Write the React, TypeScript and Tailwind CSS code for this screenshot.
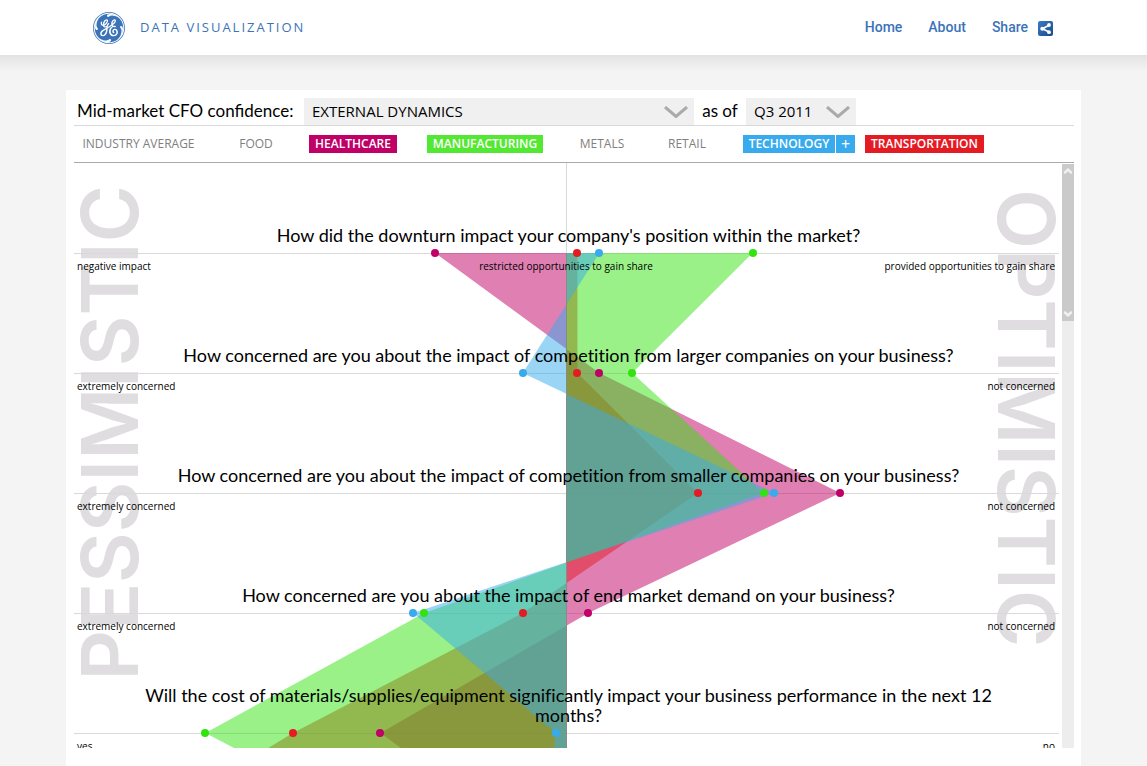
import { useState } from "react";
import { ChevronDown, ChevronUp } from "lucide-react";
import { SiGeneralelectric } from "react-icons/si";

type Series = {
  name: string;
  fill: string;
  dot: string;
  values: number[];
};

// values run from -45 (pessimistic) to 45 (optimistic), one for each question
const SCALE = 45;
const ROW = 120;
const FIRST_LINE = 90;

const series: Series[] = [
  { name: "Healthcare", fill: "fill-[#c00066]/50", dot: "bg-[#c00066]", values: [-12, 3, 25, 2, -17, -2] },
  { name: "Transportation", fill: "fill-[#e41b23]/50", dot: "bg-[#e41b23]", values: [1, 1, 12, -4, -25, -43] },
  { name: "Technology", fill: "fill-[#37abed]/50", dot: "bg-[#37abed]", values: [3, -4, 19, -14, -1, -2] },
  { name: "Manufacturing", fill: "fill-[#33e30f]/50", dot: "bg-[#33e30f]", values: [17, 6, 18, -13, -33, -12] },
];

const areaOrder = ["Healthcare", "Transportation", "Manufacturing", "Technology"];

const questions = [
  {
    text: "How did the downturn impact your company's position within the market?",
    left: "negative impact",
    middle: "restricted opportunities to gain share",
    right: "provided opportunities to gain share",
  },
  {
    text: "How concerned are you about the impact of competition from larger companies on your business?",
    left: "extremely concerned",
    right: "not concerned",
  },
  {
    text: "How concerned are you about the impact of competition from smaller companies on your business?",
    left: "extremely concerned",
    right: "not concerned",
  },
  {
    text: "How concerned are you about the impact of end market demand on your business?",
    left: "extremely concerned",
    right: "not concerned",
  },
  {
    text: "Will the cost of materials/supplies/equipment significantly impact your business performance in the next 12 months?",
    left: "yes",
    right: "no",
  },
];

const filters = [
  { label: "Industry average", width: "w-[129px]" },
  { label: "Food", width: "w-[46px]" },
  { label: "Healthcare", width: "w-[88px]", active: "bg-[#c00066]" },
  { label: "Manufacturing", width: "w-[116px]", active: "bg-[#53e831]" },
  { label: "Metals", width: "w-[58px]" },
  { label: "Retail", width: "w-[52px]" },
  { label: "Technology", width: "w-[92px]", active: "bg-[#37abed]", expandable: true },
  { label: "Transportation", width: "w-[119px]", active: "bg-[#e41b23]" },
];

const areaPoints = (values: number[]) => {
  const edge = values.map((v, i) => `${v},${FIRST_LINE + i * ROW}`).join(" ");
  return `0,${FIRST_LINE} ${edge} 0,${FIRST_LINE + (values.length - 1) * ROW}`;
};

const ShareIcon = () => (
  <svg viewBox="0 0 15 15" className="mt-0.5 size-[15px]" aria-hidden="true">
    <defs>
      <linearGradient id="share" x1="0" y1="0" x2="1" y2="1">
        <stop offset="0" stopColor="#3f7ac4" />
        <stop offset="1" stopColor="#174a8c" />
      </linearGradient>
    </defs>
    <rect width="15" height="15" rx="2" fill="url(#share)" />
    <path d="M11 4.3 4.5 7.7 11 11" fill="none" stroke="#fff" strokeWidth="1.7" />
    <circle cx="11" cy="4" r="1.9" fill="#fff" />
    <circle cx="4.3" cy="7.7" r="2" fill="#fff" />
    <circle cx="11" cy="11.2" r="1.9" fill="#fff" />
  </svg>
);

const Header = () => (
  <header className="h-[55px] bg-white">
    <div className="mx-auto flex h-full max-w-[961px] items-center pr-px">
      <SiGeneralelectric className="size-8 text-[#3b73b9]" />
      <h1 className="ml-[15px] text-[13px] tracking-[2px] text-[#3b73b9]">DATA VISUALIZATION</h1>
      <nav className="ml-auto flex items-center gap-[26px] font-[Roboto,sans-serif] text-[14px] font-medium text-[#3b73b9]">
        <a href="#home">Home</a>
        <a href="#about">About</a>
        <a href="#share" className="flex items-center gap-[10px]">
          Share
          <ShareIcon />
        </a>
      </nav>
    </div>
  </header>
);

const SelectArrow = () => (
  <svg viewBox="0 0 24 12" className="pointer-events-none absolute top-2 right-1.5 h-3 w-6" aria-hidden="true">
    <path d="M1 1 12 10.500 23 1" fill="none" stroke="#aaa" strokeWidth="3" />
  </svg>
);

const Toolbar = () => (
  <div className="flex h-7 border-b border-[#d9d9d9] font-[Lato,sans-serif] text-[17px] leading-[26px]">
    <label htmlFor="topic" className="w-[230px] shrink-0 pl-[3px] whitespace-nowrap">
      Mid-market CFO confidence:
    </label>
    <div className="relative w-[390px] min-w-0">
      <select
        id="topic"
        className="h-[27px] w-full appearance-none bg-[#f0f0f0] px-2 pb-0.5 font-['Open_Sans',sans-serif] text-[15px]"
      >
        <option>EXTERNAL DYNAMICS</option>
        <option>INTERNAL DYNAMICS</option>
      </select>
      <SelectArrow />
    </div>
    <label htmlFor="quarter" className="w-[52px] shrink-0 text-center whitespace-nowrap">
      as of
    </label>
    <div className="relative w-[110px] shrink-0">
      <select
        id="quarter"
        className="h-[27px] w-full appearance-none bg-[#f0f0f0] px-2 pb-0.5 font-['Open_Sans',sans-serif] text-[15px]"
      >
        <option>Q3 2011</option>
        <option>Q2 2011</option>
      </select>
      <SelectArrow />
    </div>
  </div>
);

const Filters = () => {
  const [hidden, setHidden] = useState<string[]>([]);

  const toggle = (label: string) =>
    setHidden(hidden.includes(label) ? hidden.filter((l) => l !== label) : [...hidden, label]);

  return (
    <div className="flex h-[37px] items-center gap-[30px] border-b border-[#aaa] text-[12px] leading-[18px]">
      {filters.map(({ label, width, active, expandable }) => {
        const on = active && !hidden.includes(label);
        return (
          <div key={label} className={`relative shrink-0 ${width}`}>
            <button
              onClick={() => toggle(label)}
              className={`h-[18px] w-full text-center whitespace-nowrap uppercase ${on ? `font-semibold text-white ${active}` : "text-[#808080]"}`}
            >
              {label}
            </button>
            {expandable && (
              <button
                aria-label="Show sub-industries"
                className="absolute top-0 left-full ml-px h-[18px] w-[19px] bg-[#37abed] text-[16px] text-white"
              >
                +
              </button>
            )}
          </div>
        );
      })}
    </div>
  );
};

const Chart = () => (
  <div className="relative h-full min-w-0 flex-1 overflow-hidden">
    <div className="absolute top-[22px] left-[3px] rotate-180 font-[Inter,sans-serif] text-[78px] leading-[66px] font-semibold text-[#dfdddf] [writing-mode:vertical-rl]">
      PESSIMISTIC
    </div>
    <div className="absolute top-[26px] right-0 font-[Inter,sans-serif] text-[78px] leading-[66px] font-semibold text-[#dfdddf] [writing-mode:vertical-rl]">
      OPTIMISTIC
    </div>
    <div className="absolute inset-y-0 left-1/2 -ml-px w-px bg-[#d9d9d9]" />

    <div className="absolute inset-x-0 top-0">
      {questions.map((q) => (
        <div key={q.text} className="h-[120px]">
          <div className="h-[91px] border-b border-[#d9d9d9]" />
        </div>
      ))}
    </div>

    <svg
      viewBox={`-${SCALE} 0 ${SCALE * 2} 690`}
      preserveAspectRatio="none"
      className="absolute inset-x-0 top-0 h-[690px] w-full"
      aria-hidden="true"
    >
      {areaOrder.map((name) => {
        const item = series.find((s) => s.name === name)!;
        return <polygon key={name} points={areaPoints(item.values)} className={item.fill} />;
      })}
    </svg>
    <div className="absolute top-[90px] bottom-0 left-1/2 -ml-px w-px bg-[#808080]/60" />

    <ol className="relative">
      {questions.map((q, i) => (
        <li key={q.text} className="relative h-[120px]">
          <div className="flex h-[91px] items-end justify-center pr-14 pb-[9px] pl-15">
            <h2 className="text-center font-[Lato,sans-serif] text-[18px] leading-5 [font-variant-ligatures:none]">
              {q.text}
            </h2>
          </div>
          <div className="grid grid-cols-3 pt-[3px] pr-1 pl-[3px] text-[10px] leading-[18px] whitespace-nowrap">
            <span>{q.left}</span>
            <span className="text-center">{q.middle}</span>
            <span className="text-right">{q.right}</span>
          </div>
          {series.map((s) => (
            <span
              key={s.name}
              className={`absolute top-[86px] -ml-1 size-2 rounded-full ${s.dot}`}
              style={{ left: `${((s.values[i] + SCALE) / (SCALE * 2)) * 100}%` }}
            />
          ))}
        </li>
      ))}
    </ol>
  </div>
);

const ScrollBar = () => (
  <div className="mt-px ml-[3px] w-3 shrink-0 bg-[#ededed]">
    <div className="flex h-[157px] flex-col items-center justify-between bg-[#cacaca] py-px text-[#f0f0f0]">
      <ChevronUp size={12} strokeWidth={5} />
      <ChevronDown size={12} strokeWidth={5} />
    </div>
  </div>
);

const App = () => (
  <div className="flex min-h-screen flex-col bg-[#f4f4f4] font-['Open_Sans',sans-serif] text-black">
    <Header />
    <div className="h-4 bg-linear-to-b from-[#e3e3e3] to-[#f4f4f4]" />
    <main className="mx-auto mt-[19px] w-full max-w-[1015px] flex-1 bg-white px-2 pt-2 pr-[7px]">
      <Toolbar />
      <Filters />
      <div className="flex h-[585px]">
        <Chart />
        <ScrollBar />
      </div>
    </main>
  </div>
);

export default App;
